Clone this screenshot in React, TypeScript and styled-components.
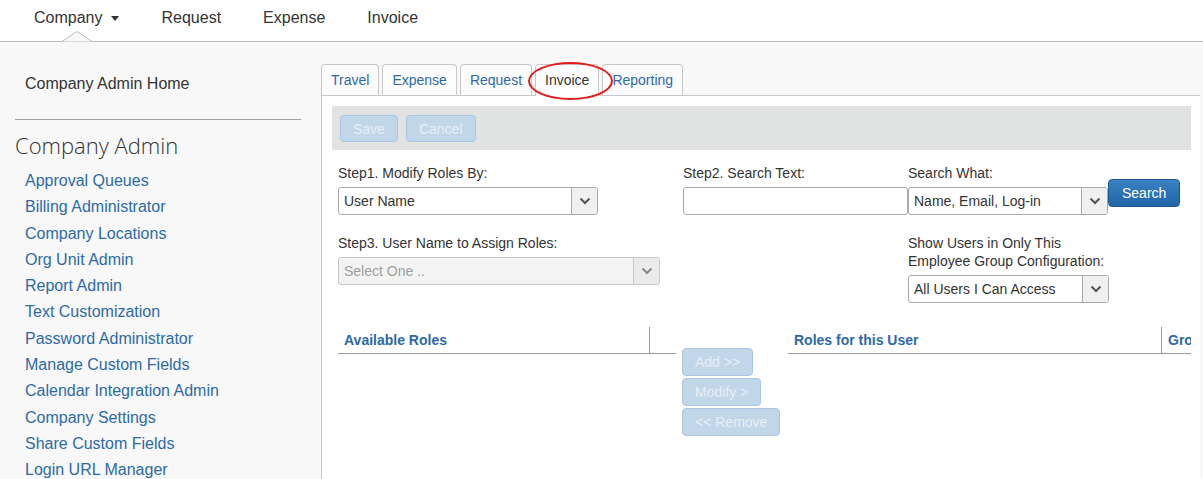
import React from "react";
import styled, { createGlobalStyle } from "styled-components";

const GlobalStyle = createGlobalStyle`
  body {
    margin: 0;
    background: #f8f8f8;
    font-family: "Liberation Sans", Arial, sans-serif;
    color: #333;
    overflow: hidden;
  }
  * {
    box-sizing: border-box;
  }
`;

const Page = styled.div`
  min-height: 479px;
  display: flex;
  flex-direction: column;
`;

const TopNav = styled.nav`
  height: 42px;
  background: #fff;
  border-bottom: 1px solid #bdbdbd;
  display: flex;
  padding-left: 13px;
`;

const NavItem = styled.div`
  position: relative;
  display: flex;
  align-items: flex-start;
  padding: 9px 21px 0;
  font-size: 16px;
  line-height: 18px;
  color: #333;
`;

const Caret = styled.span`
  display: inline-block;
  margin: 7px 0 0 9px;
  border-top: 5px solid #333;
  border-left: 4px solid transparent;
  border-right: 4px solid transparent;
`;

const Notch = styled.svg`
  position: absolute;
  left: 50%;
  bottom: -1px;
  transform: translateX(-50%);
`;

const Body = styled.div`
  flex: 1;
  display: flex;
`;

const Sidebar = styled.aside`
  width: 321px;
  flex-shrink: 0;
  padding-top: 32px;
`;

const HomeLink = styled.div`
  padding-left: 25px;
  font-size: 16px;
  line-height: 20px;
  color: #333;
`;

const Divider = styled.hr`
  margin: 25px 0 0 15px;
  width: 286px;
  border: 0;
  border-top: 1px solid #a0a0a0;
`;

const SideHeading = styled.h2`
  margin: 12px 0 9px 15px;
  font-family: "Open Sans", "Liberation Sans", sans-serif;
  font-weight: 300;
  font-size: 22px;
  line-height: 27px;
  color: #333;
`;

const SideLink = styled.div`
  padding-left: 25px;
  font-size: 16px;
  line-height: 26.3px;
  color: #2c6aa6;
`;

const Main = styled.main`
  flex: 1;
  min-width: 0;
  display: flex;
  flex-direction: column;
  padding-top: 22px;
  margin-right: 3px;
`;

const TabBar = styled.div`
  display: flex;
  align-items: flex-end;
  height: 31px;
`;

const Tab = styled.div<{ $active?: boolean }>`
  position: relative;
  height: ${(p) => (p.$active ? "32px" : "31px")};
  margin: 0 3px ${(p) => (p.$active ? "-1px" : "0")} 0;
  padding: 0 9px;
  border: 1px solid #c8c8c8;
  border-bottom: none;
  border-radius: 4px 4px 0 0;
  background: ${(p) => (p.$active ? "#fff" : "#fcfcfc")};
  color: ${(p) => (p.$active ? "#333" : "#2c6aa6")};
  font-size: 14px;
  line-height: 30px;
  z-index: ${(p) => (p.$active ? 1 : 0)};
`;

const Highlight = styled.span`
  position: absolute;
  left: -8px;
  top: -3px;
  width: 85px;
  height: 38px;
  border: 2px solid #e21b1b;
  border-radius: 50%;
  pointer-events: none;
`;

const Panel = styled.section`
  flex: 1;
  min-width: 0;
  overflow: hidden;
  background: #fff;
  border-top: 1px solid #c8c8c8;
  border-left: 1px solid #c8c8c8;
  padding: 10px 9px 0 10px;
`;

const Toolbar = styled.div`
  height: 44px;
  background: #e1e3e3;
  display: flex;
  gap: 8px;
  padding: 9px 8px;
`;

const Button = styled.button<{ $primary?: boolean }>`
  height: ${(p) => (p.$primary ? "28px" : "27px")};
  padding: 0 ${(p) => (p.$primary ? "13px" : "12px")};
  border-radius: 4px;
  font-family: "Liberation Sans", Arial, sans-serif;
  font-size: 14px;
  white-space: nowrap;
  border: 1px solid ${(p) => (p.$primary ? "#1c5a98" : "#a9c7e2")};
  background: ${(p) =>
    p.$primary ? "linear-gradient(#3a82c5, #1f64a7)" : "#c1d6e8"};
  color: ${(p) => (p.$primary ? "#fff" : "#e8eff6")};
  cursor: default;
`;

const Form = styled.div`
  display: grid;
  grid-template-columns: 345px 225px 200px auto;
  row-gap: 19px;
  margin: 14px 0 0 6px;
`;

const Field = styled.div<{ $span?: string }>`
  display: flex;
  flex-direction: column;
  gap: 5px;
  grid-column: ${(p) => p.$span ?? "auto"};
`;

const Label = styled.label`
  font-size: 14px;
  line-height: 18px;
  color: #333;
`;

const SelectBox = styled.div<{ $width: number; $disabled?: boolean }>`
  width: ${(p) => p.$width}px;
  height: 28px;
  display: flex;
  border: 1px solid ${(p) => (p.$disabled ? "#c9c9c9" : "#a9a9a9")};
  border-radius: 3px;
  background: ${(p) => (p.$disabled ? "#f3f3f3" : "#fff")};
  color: ${(p) => (p.$disabled ? "#a0a0a0" : "#333")};
  font-size: 14px;
  overflow: hidden;
`;

const SelectText = styled.span`
  flex: 1;
  padding-left: 5px;
  line-height: 26px;
  white-space: nowrap;
`;

const ArrowBox = styled.span<{ $disabled?: boolean }>`
  width: 26px;
  display: flex;
  align-items: center;
  justify-content: center;
  background: ${(p) => (p.$disabled ? "#ebebeb" : "#f0f0f0")};
  border-left: 1px solid ${(p) => (p.$disabled ? "#c9c9c9" : "#a9a9a9")};
`;

const TextInput = styled.div`
  width: 225px;
  height: 28px;
  border: 1px solid #a9a9a9;
  border-radius: 3px;
  background: #fff;
`;

const SearchSlot = styled.div`
  padding-top: 15px;
`;

const Roles = styled.div`
  display: flex;
  align-items: flex-start;
  margin: 24px 0 0 6px;
`;

const RoleTable = styled.div<{ $grow?: boolean }>`
  display: flex;
  width: ${(p) => (p.$grow ? "auto" : "338px")};
  flex: ${(p) => (p.$grow ? "1" : "none")};
  min-width: 0;
  overflow: hidden;
  border-bottom: 1px solid #9a9a9a;
`;

const HeadCell = styled.div<{ $width: number; $divider?: boolean }>`
  flex: none;
  width: ${(p) => p.$width}px;
  height: 26px;
  padding-left: 6px;
  border-right: ${(p) => (p.$divider ? "1px solid #9a9a9a" : "none")};
  font-size: 14px;
  font-weight: bold;
  line-height: 26px;
  color: #2c6aa6;
  white-space: nowrap;
`;

const MoveButtons = styled.div`
  width: 98px;
  flex: none;
  margin: 21px 8px 0 6px;
  display: flex;
  flex-direction: column;
  align-items: flex-start;
  gap: 2px;

  ${Button} {
    height: 28px;
  }
`;

const Chevron = ({ color = "#555" }: { color?: string }) => (
  <svg width="12" height="8" viewBox="0 0 12 8">
    <polyline
      points="1.5,1.5 6,6 10.5,1.5"
      fill="none"
      stroke={color}
      strokeWidth="2"
    />
  </svg>
);

const Select = ({
  value,
  width,
  disabled,
}: {
  value: string;
  width: number;
  disabled?: boolean;
}) => (
  <SelectBox $width={width} $disabled={disabled}>
    <SelectText>{value}</SelectText>
    <ArrowBox $disabled={disabled}>
      <Chevron color={disabled ? "#888" : "#555"} />
    </ArrowBox>
  </SelectBox>
);

const sideLinks = [
  "Approval Queues",
  "Billing Administrator",
  "Company Locations",
  "Org Unit Admin",
  "Report Admin",
  "Text Customization",
  "Password Administrator",
  "Manage Custom Fields",
  "Calendar Integration Admin",
  "Company Settings",
  "Share Custom Fields",
  "Login URL Manager",
];

const tabs = ["Travel", "Expense", "Request", "Invoice", "Reporting"];

const App = () => {
  return (
    <Page>
      <GlobalStyle />
      <TopNav>
        <NavItem>
          Company
          <Caret />
          <Notch width="30" height="11" viewBox="0 0 30 11">
            <polyline
              points="0,10.5 15,0.5 30,10.5"
              fill="#f8f8f8"
              stroke="#bdbdbd"
              strokeWidth="1"
            />
          </Notch>
        </NavItem>
        <NavItem>Request</NavItem>
        <NavItem>Expense</NavItem>
        <NavItem>Invoice</NavItem>
      </TopNav>

      <Body>
        <Sidebar>
          <HomeLink>Company Admin Home</HomeLink>
          <Divider />
          <SideHeading>Company Admin</SideHeading>
          {sideLinks.map((l) => (
            <SideLink key={l}>{l}</SideLink>
          ))}
        </Sidebar>

        <Main>
          <TabBar>
            {tabs.map((t) => (
              <Tab key={t} $active={t === "Invoice"}>
                {t}
                {t === "Invoice" && <Highlight />}
              </Tab>
            ))}
          </TabBar>

          <Panel>
            <Toolbar>
              <Button>Save</Button>
              <Button>Cancel</Button>
            </Toolbar>

            <Form>
              <Field>
                <Label>Step1. Modify Roles By:</Label>
                <Select value="User Name" width={260} />
              </Field>
              <Field>
                <Label>Step2. Search Text:</Label>
                <TextInput />
              </Field>
              <Field>
                <Label>Search What:</Label>
                <Select value="Name, Email, Log-in" width={200} />
              </Field>
              <SearchSlot>
                <Button $primary>Search</Button>
              </SearchSlot>

              <Field $span="1 / 3">
                <Label>Step3. User Name to Assign Roles:</Label>
                <Select value="Select One .." width={322} disabled />
              </Field>
              <Field $span="3 / 5">
                <Label>
                  Show Users in Only This
                  <br />
                  Employee Group Configuration:
                </Label>
                <Select value="All Users I Can Access" width={201} />
              </Field>
            </Form>

            <Roles>
              <RoleTable>
                <HeadCell $width={312} $divider>
                  Available Roles
                </HeadCell>
                <HeadCell $width={26} />
              </RoleTable>
              <MoveButtons>
                <Button>Add &gt;&gt;</Button>
                <Button>Modify &gt;</Button>
                <Button>&lt;&lt; Remove</Button>
              </MoveButtons>
              <RoleTable $grow>
                <HeadCell $width={374} $divider>
                  Roles for this User
                </HeadCell>
                <HeadCell $width={160}>Group</HeadCell>
              </RoleTable>
            </Roles>
          </Panel>
        </Main>
      </Body>
    </Page>
  );
};

export default App;
